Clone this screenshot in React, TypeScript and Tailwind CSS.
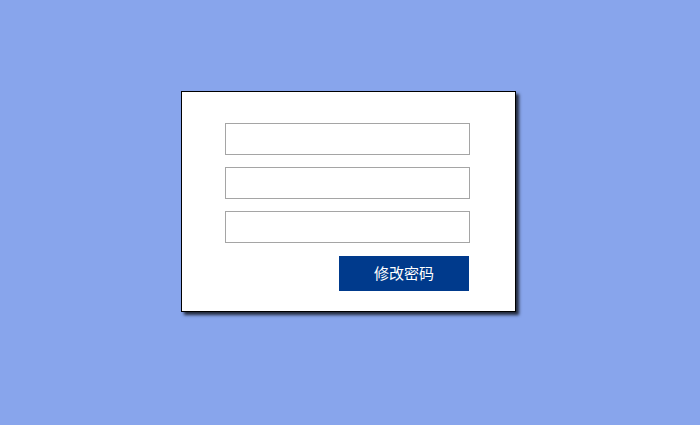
export default function App() {
  return (
    <div
      className="w-[700px] h-[425px] bg-[#88a5ec] pl-[181px] pt-[91px]"
      style={{ fontFamily: '"Noto Sans CJK SC", "Liberation Sans", sans-serif' }}
    >
      <div className="w-[335px] h-[221px] bg-white border border-black shadow-[3px_3px_3px_rgba(0,0,0,0.75)] pl-[43px] pt-[31px]">
        <div className="flex flex-col gap-[12px] w-[245px]">
          <input className="h-[32px] border border-[#a5a5a5] bg-white outline-none" />
          <input className="h-[32px] border border-[#a5a5a5] bg-white outline-none" />
          <input className="h-[32px] border border-[#a5a5a5] bg-white outline-none" />
        </div>
        <div className="flex justify-end w-[244px] mt-[13px]">
          <button className="w-[130px] h-[35px] bg-[#003a8c] text-white text-[15px]">
            修改密码
          </button>
        </div>
      </div>
    </div>
  );
}
